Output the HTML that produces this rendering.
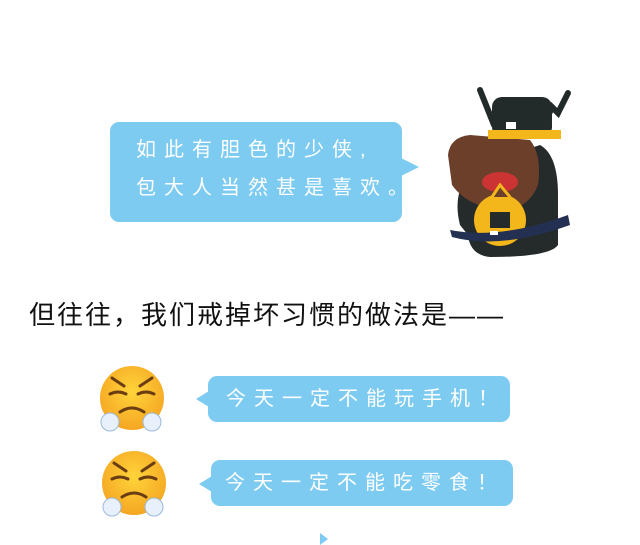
<!DOCTYPE html>
<html><head><meta charset="utf-8"><style>
body{margin:0;width:640px;height:539px;background:#fff;position:relative;overflow:hidden;font-family:"Liberation Sans","Noto Sans CJK SC",sans-serif}
.b{position:absolute;background:#7dcbf1;border-radius:9px;color:#fff;font-size:20px;letter-spacing:8px;white-space:nowrap}
.t{position:absolute;width:0;height:0}
.h{position:absolute;left:29px;top:295px;font-size:26px;letter-spacing:2px;color:#111;white-space:nowrap}
</style></head><body>
<div class="b" style="left:110px;top:122px;width:292px;height:100px;">
<div style="position:absolute;left:26px;top:9px;line-height:38px">如此有胆色的少侠,<br>包大人当然甚是喜欢。</div></div>
<div class="t" style="left:401px;top:158px;border-left:18px solid #7dcbf1;border-top:9px solid transparent;border-bottom:9px solid transparent"></div>

<svg style="position:absolute;left:430px;top:85px" width="150" height="180" viewBox="0 0 150 180">
<line x1="50" y1="5" x2="64" y2="40" stroke="#222a2a" stroke-width="6" stroke-linecap="round"/>
<polyline points="138,8 128,28 122,22 115,38" fill="none" stroke="#222a2a" stroke-width="6" stroke-linecap="round"/>
<rect x="62" y="12" width="60" height="40" rx="10" fill="#222a2a"/>
<rect x="76" y="37" width="10" height="7" fill="#fff"/>
<path d="M30 140 Q20 100 50 80 L110 60 Q128 70 128 110 L128 160 Q120 172 60 172 Q40 170 38 150 Z" fill="#252b2b"/>
<path d="M18 70 Q20 52 40 50 L100 55 Q112 70 108 100 Q100 120 80 125 Q40 125 22 100 Z" fill="#6b3f2a"/>
<rect x="58" y="45" width="73" height="9" fill="#f3b61b"/>
<ellipse cx="70" cy="97" rx="18" ry="10" fill="#cc3333"/>
<circle cx="70" cy="135" r="26" fill="#f3b61b"/>
<path d="M62 112 L70 100 L80 112" fill="#6b3f2a" stroke="#f3b61b" stroke-width="3"/>
<rect x="60" y="127" width="20" height="16" fill="#252b2b"/>
<path d="M20 145 Q70 155 138 130 L140 140 Q70 165 22 152 Z" fill="#243052"/>
<rect x="60" y="146" width="8" height="4" fill="#fff"/>
</svg>

<div class="h">但往往，我们戒掉坏习惯的做法是——</div>

<svg style="position:absolute;left:96px;top:364px" width="76" height="160" viewBox="0 0 76 160">
<defs><radialGradient id="g" cx="50%" cy="40%" r="60%"><stop offset="0" stop-color="#ffd43a"/><stop offset="1" stop-color="#f5a623"/></radialGradient></defs>
<g id="e">
<circle cx="36" cy="34" r="32" fill="url(#g)"/>
<path d="M16 14 L28 22 M56 14 L44 22 M14 30 Q22 26 30 30 M42 30 Q50 26 58 30 M24 48 Q36 40 48 48" stroke="#6b3d12" stroke-width="3" fill="none" stroke-linecap="round"/>
<circle cx="14" cy="58" r="9" fill="#e8f0fb" stroke="#9bb9dc"/>
<circle cx="56" cy="58" r="9" fill="#e8f0fb" stroke="#9bb9dc"/>
</g>
<use href="#e" y="85" x="2"/>
</svg>

<div class="b" style="left:208px;top:376px;width:302px;height:46px;"><div style="position:absolute;left:18px;top:12px;line-height:22px">今天一定不能玩手机！</div></div>
<div class="t" style="left:196px;top:391px;border-right:13px solid #7dcbf1;border-top:8px solid transparent;border-bottom:8px solid transparent"></div>
<div class="b" style="left:211px;top:460px;width:302px;height:46px;"><div style="position:absolute;left:14px;top:12px;line-height:22px">今天一定不能吃零食！</div></div>
<div class="t" style="left:199px;top:476px;border-right:13px solid #7dcbf1;border-top:8px solid transparent;border-bottom:8px solid transparent"></div>
<div class="t" style="left:320px;top:533px;border-left:8px solid #7dcbf1;border-top:6px solid transparent;border-bottom:6px solid transparent"></div>
</body></html>
